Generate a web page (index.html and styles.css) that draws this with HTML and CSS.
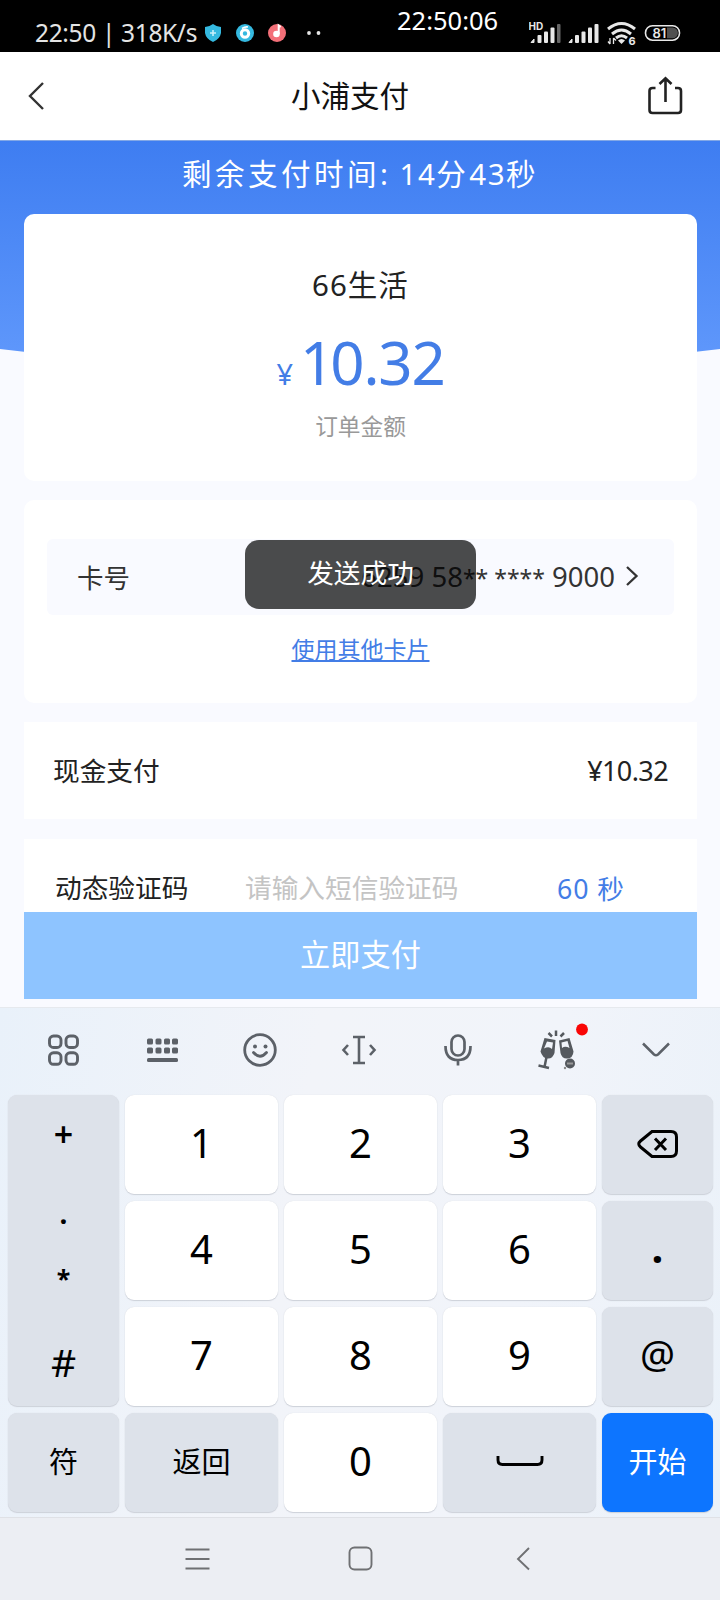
FILE: index.html
```html
<!DOCTYPE html>
<html lang="zh-CN">
<head>
<meta charset="utf-8">
<title>小浦支付</title>
<link rel="stylesheet" href="styles.css">
</head>
<body>
<div class="phone">
  <div class="status">
    <div class="status-left"><span class="net">22:50 | 318K/s</span>
      <svg class="status-apps" width="120" height="22" viewBox="0 0 120 22">
        <path d="M8 2 Q12 5 16 5 V11 Q15 17 8 20 Q1 17 0 11 V5 Q4 5 8 2Z" fill="#35b9e0"/>
        <path d="M8 8v6M5 11h6" stroke="#c8f0fa" stroke-width="1.600"/>
        <circle cx="40" cy="11" r="9" fill="#35b9e0"/><circle cx="40" cy="11.500" r="3.700" fill="none" stroke="#fff" stroke-width="3"/><path d="M37 6.500Q40 4.500 43 5" stroke="#fff" stroke-width="1.600" fill="none"/>
        <circle cx="72" cy="11" r="9" fill="#f36f78"/><circle cx="71.500" cy="12" r="3.300" fill="#fff"/><path d="M73.700 12V3.500l2 1.500" stroke="#fff" stroke-width="2" fill="none"/>
        <circle cx="104" cy="11" r="1.900" fill="#e4e4e4"/><circle cx="113.500" cy="11" r="1.900" fill="#e4e4e4"/>
      </svg>
    </div>
    <span class="clock">22:50:06</span>
    <svg class="signals" width="154" height="28" viewBox="0 0 154 28">
      <text x="-.5" y="11" class="hd">HD</text>
      <g fill="#e8e8e8"><path d="M2 23.500L5 20V23.500ZM40 23.500L43 20V23.500Z" stroke="#e8e8e8"/><rect x="8.500" y="16" width="4" height="8" rx="1"/><rect x="15" y="12.500" width="4" height="11.500" rx="1"/><rect x="21.500" y="8.500" width="4" height="15.500" rx="1"/><rect x="28" y="5" width="3.500" height="19" rx="1" fill="#666"/>
      <rect x="46" y="16" width="4" height="8" rx="1"/><rect x="52.500" y="12.500" width="4" height="11.500" rx="1"/><rect x="59" y="8.500" width="4" height="15.500" rx="1"/><rect x="65.500" y="5" width="4" height="19" rx="1"/></g>
      <g fill="none" stroke="#e8e8e8" stroke-width="3"><path d="M79 10Q92.500-1 106 10"/><path d="M83 15Q92.500 7 102 15"/><path d="M87 19Q92.500 14.500 98 19"/></g>
      <path d="M89 21.500Q92.500 18.500 96 21.500L92.500 25Z" fill="#e8e8e8"/>
      <path d="M81 19v6M79 22.500l2 2.500M84.500 25v-6M87 21.500l-2.500-2.500" stroke="#e8e8e8" stroke-width="1.300"/>
      <text x="99.500" y="26" class="six">6</text>
      <rect x="116.500" y="6.700" width="34" height="14.500" rx="7" fill="#000" stroke="#e8e8e8" stroke-width="1.600"/>
      <path d="M138 8.500h5.500a5.200 5.200 0 0 1 0 10.800H138Z" fill="#505050"/>
      <text x="123.500" y="19" class="batt">81</text>
    </svg>
  </div>

  <div class="titlebar">
    <svg width="20" height="30" viewBox="0 0 20 30"><path d="M16 2 3 15l13 13" fill="none" stroke="#333" stroke-width="2.400"/></svg>
    <h1 class="title">小浦支付</h1>
    <svg width="36" height="40" viewBox="0 0 36 40"><path d="M8.500 12H5.500Q2.500 12 2.500 15V34Q2.500 37 5.500 37H31Q34 37 34 34V15Q34 12 31 12H28M18.500 26V2.500M12.500 8 18.500 2.200 24.500 8" fill="none" stroke="#222" stroke-width="2.600"/></svg>
  </div>

  <main class="page">
    <svg class="banner" width="720" height="223" viewBox="0 0 720 223">
      <defs><linearGradient id="blue" x1="0" y1="0" x2="0" y2="1"><stop offset="0" stop-color="#3e7df1"/><stop offset="1" stop-color="#6199fc"/></linearGradient></defs>
      <path d="M0 0H720V209Q360 255 0 209Z" fill="url(#blue)"/>
      <path d="M0 .5H720" stroke="#83a8e6"/>
    </svg>
    <p class="countdown">剩余支付时间<span class="colon">: </span><span class="num">14</span>分<span class="num">43</span>秒</p>
    <section class="card order">
      <p class="merchant"><span class="num">66</span>生活</p>
      <p class="amount"><span class="yen">¥</span><span class="sum"><span class="one">1</span>0.32</span></p>
      <p class="caption">订单金额</p>
    </section>
    <section class="card bank">
      <div class="cardrow"><span class="label">卡号</span><span class="cardno">6259 58<span class="mask">** ****</span> 9000</span>
        <svg width="14" height="24" viewBox="0 0 14 24"><path d="M1 3l9.500 9L1 21" fill="none" stroke="#333" stroke-width="2.300"/></svg>
        <div class="toast">发送成功</div>
      </div>
      <a class="other">使用其他卡片</a>
    </section>
    <section class="card cash"><span>现金支付</span><span class="price">¥10.32</span></section>
    <section class="card code"><span class="code-label">动态验证码</span><span class="placeholder">请输入短信验证码</span><span class="wait"><span class="num">60</span> 秒</span></section>
    <div class="pay">立即支付</div>
  </main>

  <div class="keyboard">
    <div class="tools">
      <svg width="98" height="56" viewBox="-49 -28 98 56"><g fill="none" stroke="#5c6168" stroke-width="2.900"><rect x="-13.500" y="-14" width="11.500" height="11.500" rx="4"/><rect x="3" y="-14" width="11.500" height="11.500" rx="4"/><rect x="-13.500" y="2.800" width="11.500" height="11.500" rx="4"/><rect x="3" y="2.800" width="11.500" height="11.500" rx="4"/></g></svg>
      <svg width="98" height="56" viewBox="-49 -28 98 56"><g fill="#5c6168"><rect x="-15" y="-11.500" width="6" height="6" rx="1.500"/><rect x="-6.500" y="-11.500" width="6" height="6" rx="1.500"/><rect x="2" y="-11.500" width="6" height="6" rx="1.500"/><rect x="10" y="-11.500" width="6" height="6" rx="1.500"/><rect x="-15" y="-2.500" width="6" height="6" rx="1.500"/><rect x="-6.500" y="-2.500" width="6" height="6" rx="1.500"/><rect x="2" y="-2.500" width="6" height="6" rx="1.500"/><rect x="10" y="-2.500" width="6" height="6" rx="1.500"/><rect x="-15" y="8" width="31" height="4" rx="1.500"/></g></svg>
      <svg width="98" height="56" viewBox="-49 -28 98 56"><g fill="none" stroke="#5c6168" stroke-width="2.800"><circle r="15.300"/><path d="M-6.500 2.500Q0 10 6.500 2.500" stroke-linecap="round"/></g><circle cx="-5" cy="-3.500" r="2" fill="#5c6168"/><circle cx="5.500" cy="-3.500" r="2" fill="#5c6168"/></svg>
      <svg width="98" height="56" viewBox="-49 -28 98 56"><path d="M-6-13H6M0-13V13M-6 13H6M-11-5-15.500 0-11 5M11-5 15.500 0 11 5" fill="none" stroke="#5c6168" stroke-width="2.600"/></svg>
      <svg width="98" height="56" viewBox="-49 -28 98 56"><g fill="none" stroke="#5c6168" stroke-width="2.700"><rect x="-6.500" y="-14.500" width="13" height="20" rx="6.500"/><path d="M-12.500-4Q-12.500 10 0 10T12.500-4M0 10V15.500"/></g></svg>
      <svg width="98" height="56" viewBox="-49 -28 98 56"><g fill="#55595e"><path d="M-11.500-12-.5-10-1.500 3Q-3.500 9-8.500 8.500T-15.500 1.500ZM-9-8.500-12-1.500Q-7-4-4-1L-3-7.500Z" fill-rule="evenodd"/><path d="M3-9.500 13.500-12 17.500 1.500Q17 8 11.500 8.500T4.500 3ZM5.500-7.500 6-2Q9-4.500 13.500-2L11.500-9Z" fill-rule="evenodd"/><circle cx="14" cy="13.500" r="5"/></g><path d="M-9.500 7-11.500 17M-17.500 15.500-7 18M0-19.500V-14M-7.500-17-4-13.500M8-17 4.500-13.500" stroke="#55595e" stroke-width="2.500" fill="none"/><path d="M11 13.500H17" stroke="#999" stroke-width="2"/><circle cx="9" cy="18" r="1.200" fill="#888"/><circle cx="26" cy="-20.500" r="5.900" fill="#f90606"/></svg>
      <svg width="98" height="56" viewBox="-49 -28 98 56"><path d="M-12-6.500-1 4.500Q1 6 3 4.500L14-6.500" fill="none" stroke="#5c6168" stroke-width="2.500"/></svg>
    </div>
    <div class="keys">
      <div class="key side tall"><span class="plus">+</span><span class="dot">.</span><span class="star">*</span><span class="hash">#</span></div>
      <div class="key">1</div><div class="key">2</div><div class="key">3</div>
      <div class="key side"><svg width="42" height="30" viewBox="0 0 42 30"><path d="M15 2.500H34Q39.500 2.500 39.500 8V22Q39.500 27.500 34 27.500H15L3.500 18Q0 15 3.500 12Z" fill="none" stroke="#000" stroke-width="3"/><path d="M18 9.500 29 21M29 9.500 18 21" stroke="#000" stroke-width="3"/></svg></div>
      <div class="key">4</div><div class="key">5</div><div class="key">6</div><div class="key side"><span class="point">.</span></div>
      <div class="key">7</div><div class="key">8</div><div class="key">9</div><div class="key side"><span class="at">@</span></div>
      <div class="key side word">符</div><div class="key side word">返回</div><div class="key">0</div>
      <div class="key side"><svg width="48" height="14" viewBox="0 0 48 14"><path d="M2 1V5Q2 9.500 6.500 9.500H41.500Q46 9.500 46 5V1" fill="none" stroke="#000" stroke-width="2.900"/></svg></div>
      <div class="key go word">开始</div>
    </div>
  </div>
  <div class="nav">
    <svg width="163" height="40" viewBox="-81.500 -20 163 40"><path d="M-12-9.500H12M-12 0H12M-12 9.500H12" stroke="#6f7073" stroke-width="1.900"/></svg>
    <svg width="163" height="40" viewBox="-81.500 -20 163 40"><rect x="-11" y="-11.500" width="22" height="22" rx="5" fill="none" stroke="#6f7073" stroke-width="1.900"/></svg>
    <svg width="163" height="40" viewBox="-81.500 -20 163 40"><path d="M5.500-11-5.500 0 5.500 10.500" fill="none" stroke="#6f7073" stroke-width="1.900"/></svg>
  </div>
</div>
</body>
</html>
```

FILE: styles.css
```css
* { box-sizing: border-box; }
body { margin: 0; background: #f9faff; font-family: "Noto Sans", "Noto Sans CJK SC", sans-serif; color: #222; }
p, h1 { margin: 0; font-weight: 400; }
svg { display: block; flex: none; }
.phone { width: 720px; height: 1600px; overflow: hidden; display: flex; flex-direction: column; }

.status { height: 52px; flex: none; background: #000; color: #e4e4e4; display: grid; grid-template-columns: 397px 132px 1fr; }
.status-left { display: flex; align-items: center; padding: 14px 0 0 35px; height: 52px; }
.net { width: 170px; font-size: 24.500px; line-height: 30px; white-space: nowrap; letter-spacing: -0.350px; }
.clock { font-size: 25.500px; line-height: 30px; padding-top: 5px; color: #fff; white-space: nowrap; }
.signals { margin-top: 19px; }
.hd { font: 700 10px Inter, sans-serif; fill: #e8e8e8; }
.six { font: 700 11px Inter, sans-serif; fill: #e8e8e8; }
.batt { font: 600 13px Inter, sans-serif; fill: #e8e8e8; }

.titlebar { height: 88px; flex: none; background: #fff; display: flex; align-items: center; justify-content: space-between; padding: 0 37px 0 27px; }
.title { font-size: 29.500px; line-height: 40px; color: #111; padding-left: 6px; }

.page { position: relative; height: 867px; flex: none; padding: 0 23px 0 24px; display: flex; flex-direction: column; }
.banner { position: absolute; left: 0; top: 0; z-index: -1; }
.countdown { height: 74px; flex: none; color: #fff; font-size: 29.500px; line-height: 67px; text-align: center; letter-spacing: 3.500px; white-space: nowrap; }
.countdown .num { letter-spacing: 1.500px; }
.colon { letter-spacing: 2px; }
.card { background: #fff; flex: none; }
.order { height: 267px; border-radius: 10px; text-align: center; padding-top: 47px; }
.merchant { font-size: 29.500px; line-height: 48px; letter-spacing: 1px; }
.amount { display: flex; justify-content: center; align-items: baseline; color: #437de6; height: 84px; line-height: 106px; }
.yen { font-size: 29px; margin-right: 7px; }
.sum { font-size: 60px; letter-spacing: -1.200px; }
.one { letter-spacing: -4px; }
.caption { font-size: 22.700px; line-height: 36px; padding-top: 16px; color: #999; }
.bank { height: 203px; margin-top: 19px; border-radius: 10px; padding: 39px 23px 0; text-align: center; }
.cardrow { position: relative; height: 76px; background: #f9faff; border-radius: 6px; display: flex; align-items: center; padding: 0 34px 2px 30px; color: #333; font-size: 26.500px; }
.label { margin-right: auto; }
.cardno { font-size: 27.500px; margin-right: 11px; padding-top: 1px; white-space: nowrap; }
.mask { font-size: 23px; }
.toast { position: absolute; left: 198px; top: 1px; width: 231px; height: 69px; border-radius: 14px; background: rgba(0,0,0,.7); color: #fff; font-size: 26.700px; line-height: 66px; text-align: center; }
.other { display: inline-block; margin-top: 16px; font-size: 23px; line-height: 36px; color: #437de6; text-decoration: underline; text-underline-offset: 2px; text-decoration-thickness: 2px; }
.cash { height: 97px; margin-top: 19px; padding: 0 29px 2px; display: flex; justify-content: space-between; align-items: center; font-size: 26.700px; }
.price { font-size: 27px; letter-spacing: -0.600px; padding-top: 2px; }
.code { height: 73px; margin-top: 20px; padding: 31px 0 0 31px; display: grid; grid-template-columns: 190px 312px 1fr; font-size: 26.700px; line-height: 36px; white-space: nowrap; }
.placeholder { color: #c4c4c4; }
.wait { color: #437de6; padding-top: 1px; letter-spacing: 0.900px; }
.pay { height: 87px; flex: none; background: #8ec4ff; color: #fff; font-size: 30.200px; line-height: 86px; text-align: center; }

.keyboard { height: 511px; flex: none; padding: 14px 6px 0 8px; border-top: 1px solid #e6e9ee; background: linear-gradient(100deg, #e9f1fa 0, #f2f4f9 40%, #f1f4fa 70%, #eaf1f9 100%); border-bottom: 1px solid #dfe1e6; }
.tools { display: grid; grid-template-columns: repeat(7, 98.700px); height: 72.500px; margin-left: 6px; }
.keys { display: grid; grid-template-columns: 111px 153px 153px 153px 111px; grid-template-rows: repeat(4, 99px); gap: 7px 6px; }
.key { display: flex; align-items: center; justify-content: center; background: #fff; border-radius: 9px; box-shadow: 0 1px 1px #cdd1d9, 0 0 1px #d5d8df; font-size: 40px; line-height: 1; padding-bottom: 3px; color: #000; }
.side { background: #dde2ea; padding-bottom: 0; }
.tall { grid-row: span 3; display: grid; grid-template-rows: 79px 78px 54px 100px; justify-items: center; align-items: center; }
.word { font-size: 29px; padding-bottom: 1px; }
.go { background: #0d75ff; color: #fff; }
.plus { font-size: 34px; font-weight: 600; }
.dot { font-size: 28px; font-weight: 700; }
.star { font-size: 25px; font-weight: 700; }
.hash { font-size: 39px; padding-top: 12px; }
.point { font-size: 42px; font-weight: 700; padding-bottom: 7px; }
.at { font-size: 39px; padding-bottom: 7px; }
.nav { height: 82px; flex: none; background: #eceef3; display: flex; justify-content: center; padding-top: 21px; }
```
